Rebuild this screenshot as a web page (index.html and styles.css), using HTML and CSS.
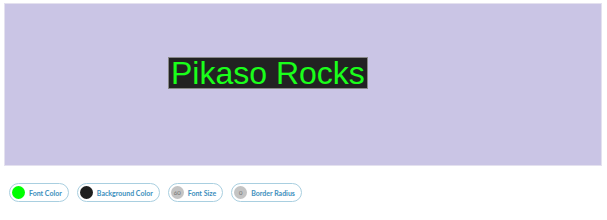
FILE: index.html
```html
<!DOCTYPE html>
<html lang="en">
<head>
  <meta charset="UTF-8">
  <title>Pikaso</title>
  <link rel="stylesheet" href="styles.css">
</head>
<body>

<div class="canvas">
  <span class="label">Pikaso Rocks</span>
</div>

<div class="toolbar">
  <button class="pill"><span class="dot green"></span>Font Color</button>
  <button class="pill"><span class="dot dark"></span>Background Color</button>
  <button class="pill"><span class="dot grey">60</span>Font Size</button>
  <button class="pill"><span class="dot grey">0</span>Border Radius</button>
</div>

</body>
</html>
```

FILE: styles.css
```css
* { box-sizing: border-box; }
body {
  margin: 0;
  background: #fff;
  font-family: Lato, "Noto Sans", sans-serif;
}

.canvas {
  margin: 3px 5px 0 4px;
  height: 163px;
  background: #cac5e5;
  border: 1px solid #e4e1ef;
  padding: 53px 0 0 163px;
}

.label {
  display: inline-block;
  font-family: "Liberation Sans", Arial, sans-serif;
  font-size: 32px;
  line-height: 30px;
  color: #1aff1a;
  background: #222;
  border: 1px solid #888;
  padding: 0 2px;
}

.toolbar {
  display: flex;
  gap: 8px;
  padding: 17px 0 0 9px;
}

.pill {
  display: flex;
  align-items: center;
  gap: 4px;
  height: 19px;
  padding: 0 6px 0 2px;
  border: 1px solid #a9cfe0;
  border-radius: 10px;
  background: #fff;
  font-family: Lato, sans-serif;
  font-weight: bold;
  font-size: 7px;
  color: #3d8fbd;
  cursor: pointer;
}

.dot {
  width: 13px;
  height: 13px;
  border-radius: 50%;
  display: flex;
  align-items: center;
  justify-content: center;
  font-size: 6px;
  font-weight: normal;
  color: #707070;
}
.green { background: #0f0; }
.dark { background: #1e1e1e; }
.grey { background: #c4c4c4; }
```
